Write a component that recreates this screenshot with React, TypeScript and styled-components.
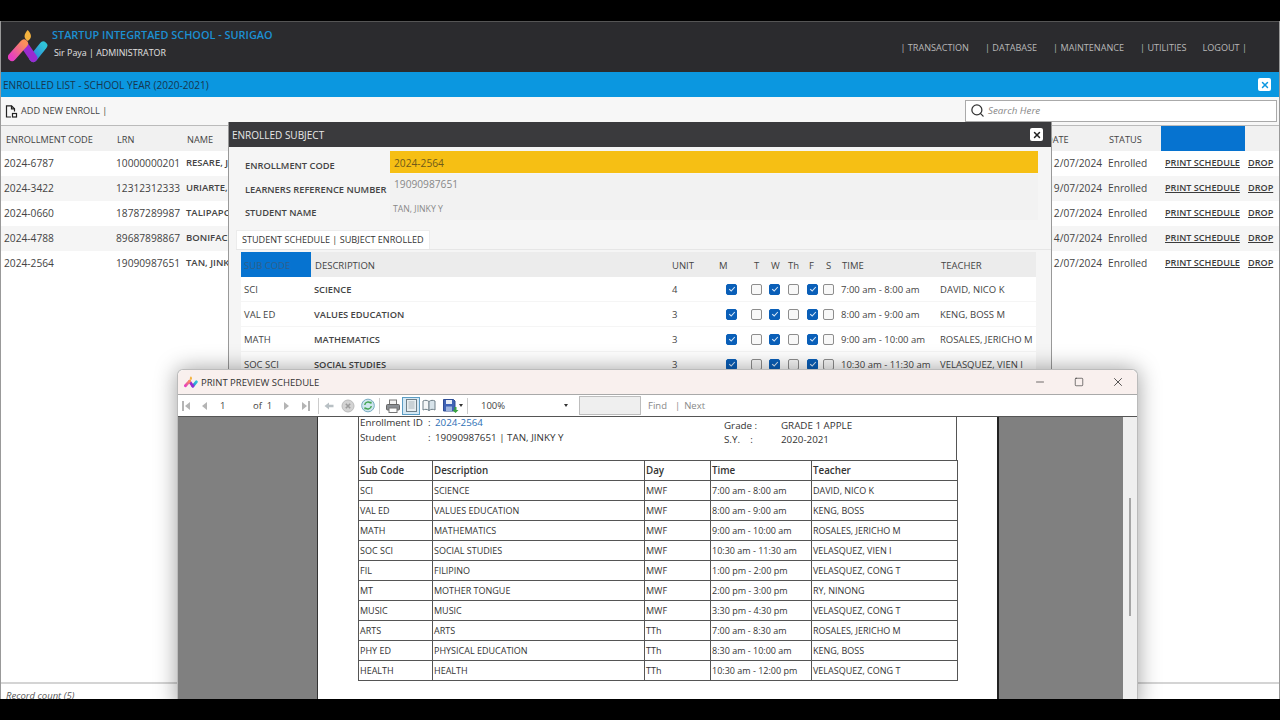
import { createGlobalStyle, styled } from 'styled-components';
import { Minus, Square, X, Search } from 'lucide-react';

const GlobalStyle = createGlobalStyle`
  html, body { margin: 0; padding: 0; background: #000; }
  * { box-sizing: border-box; }
  body { font-family: "Open Sans", "Noto Sans", "Liberation Sans", sans-serif; }
`;

const ENROLLED = [
  { code: '2024-6787', lrn: '10000000201', name: 'RESARE, J', date: '12/07/2024' },
  { code: '2024-3422', lrn: '12312312333', name: 'URIARTE, J', date: '19/07/2024' },
  { code: '2024-0660', lrn: '18787289987', name: 'TALIPAPO', date: '12/07/2024' },
  { code: '2024-4788', lrn: '89687898867', name: 'BONIFACI', date: '14/07/2024' },
  { code: '2024-2564', lrn: '19090987651', name: 'TAN, JINK', date: '12/07/2024' },
];

const SUBJECTS = [
  { code: 'SCI', desc: 'SCIENCE', unit: 4, time: '7:00 am - 8:00 am', teacher: 'DAVID, NICO K' },
  { code: 'VAL ED', desc: 'VALUES EDUCATION', unit: 3, time: '8:00 am - 9:00 am', teacher: 'KENG, BOSS M' },
  { code: 'MATH', desc: 'MATHEMATICS', unit: 3, time: '9:00 am - 10:00 am', teacher: 'ROSALES, JERICHO M' },
  { code: 'SOC SCI', desc: 'SOCIAL STUDIES', unit: 3, time: '10:30 am - 11:30 am', teacher: 'VELASQUEZ, VIEN I' },
];

const DAYS = [
  { label: 'M', width: 38, labelAt: 7, boxAt: 14, checked: true },
  { label: 'T', width: 17, labelAt: 4, boxAt: 1, checked: false },
  { label: 'W', width: 18, labelAt: 4, boxAt: 2, checked: true },
  { label: 'Th', width: 19, labelAt: 3, boxAt: 3, checked: false },
  { label: 'F', width: 17, labelAt: 5, boxAt: 3, checked: true },
  { label: 'S', width: 17, labelAt: 5, boxAt: 2, checked: false },
];

const REPORT = [
  ['SCI', 'SCIENCE', 'MWF', '7:00 am - 8:00 am', 'DAVID, NICO K'],
  ['VAL ED', 'VALUES EDUCATION', 'MWF', '8:00 am - 9:00 am', 'KENG, BOSS'],
  ['MATH', 'MATHEMATICS', 'MWF', '9:00 am - 10:00 am', 'ROSALES, JERICHO M'],
  ['SOC SCI', 'SOCIAL STUDIES', 'MWF', '10:30 am - 11:30 am', 'VELASQUEZ, VIEN I'],
  ['FIL', 'FILIPINO', 'MWF', '1:00 pm - 2:00 pm', 'VELASQUEZ, CONG T'],
  ['MT', 'MOTHER TONGUE', 'MWF', '2:00 pm - 3:00 pm', 'RY, NINONG'],
  ['MUSIC', 'MUSIC', 'MWF', '3:30 pm - 4:30 pm', 'VELASQUEZ, CONG T'],
  ['ARTS', 'ARTS', 'TTh', '7:00 am - 8:30 am', 'ROSALES, JERICHO M'],
  ['PHY ED', 'PHYSICAL EDUCATION', 'TTh', '8:30 am - 10:00 am', 'KENG, BOSS'],
  ['HEALTH', 'HEALTH', 'TTh', '10:30 am - 12:00 pm', 'VELASQUEZ, CONG T'],
];

const Logo = ({ size }: { size: number }) => (
  <svg width={size} height={size * 0.9} viewBox="0 0 40 36">
    <defs>
      <linearGradient id="lgPink" x1="0" y1="1" x2="1" y2="0">
        <stop offset="0" stopColor="#e63fc0" />
        <stop offset="1" stopColor="#fb8f5a" />
      </linearGradient>
      <linearGradient id="lgBlue" x1="0" y1="1" x2="1" y2="0">
        <stop offset="0" stopColor="#2f7fd8" />
        <stop offset="1" stopColor="#2fc3d8" />
      </linearGradient>
    </defs>
    <path d="M19.7 1 C23.5 5 24.5 9 19.7 12 C15 9 16 5 19.7 1 Z" fill="#f4b23e" />
    <path d="M25.3 29 L35.3 16.5" stroke="url(#lgBlue)" strokeWidth="8" strokeLinecap="round" />
    <path d="M16 15.5 L25.3 29" stroke="#9a2bd0" strokeWidth="8" strokeLinecap="round" />
    <path d="M4 28 L16 14.5" stroke="url(#lgPink)" strokeWidth="8" strokeLinecap="round" />
  </svg>
);

const AddDocIcon = () => (
  <svg width="13" height="13" viewBox="0 0 13 13" fill="none" stroke="#222" strokeWidth="1.2">
    <path d="M6 12 H1.5 V0.8 H6.5 L9.5 3.8 V6.5" />
    <path d="M6.5 0.8 V3.8 H9.5" />
    <rect x="7.5" y="8.5" width="4" height="3.5" fill="#fff" />
  </svg>
);

const Tri = ({ dir, bar, color = '#b4b4b4' }: { dir: 'l' | 'r'; bar?: boolean; color?: string }) => (
  <svg width="10" height="12" viewBox="0 0 10 12">
    {dir === 'l' ? <path d="M8 2 V10 L3 6 Z" fill={color} /> : <path d="M2 2 V10 L7 6 Z" fill={color} />}
    {bar && <rect x={dir === 'l' ? 0 : 8} y="1" width="2" height="10" fill={color} />}
  </svg>
);

const BackIcon = () => (
  <svg width="10" height="10" viewBox="0 0 10 10">
    <path d="M0.5 5 L5 1.5 V3.8 H9.5 V6.2 H5 V8.5 Z" fill="#b8c0c4" />
  </svg>
);

const StopIcon = () => (
  <svg width="14" height="14" viewBox="0 0 14 14">
    <circle cx="7" cy="7" r="6" fill="#d3d3d3" stroke="#bbb" />
    <path d="M4.8 4.8 L9.2 9.2 M9.2 4.8 L4.8 9.2" stroke="#9c9c9c" strokeWidth="1.6" />
  </svg>
);

const RefreshIcon = () => (
  <svg width="15" height="15" viewBox="0 0 15 15">
    <circle cx="7.5" cy="7.5" r="6.8" fill="#cfe6ee" stroke="#6fa6bd" />
    <path d="M4 7 A3.6 3.6 0 0 1 10.5 5.2" fill="none" stroke="#3fa34d" strokeWidth="1.5" />
    <path d="M11 8 A3.6 3.6 0 0 1 4.5 9.8" fill="none" stroke="#3fa34d" strokeWidth="1.5" />
    <path d="M9.3 3.4 L11.6 3.6 L11 6 Z M5.7 11.6 L3.4 11.4 L4 9 Z" fill="#3fa34d" />
  </svg>
);

const PrinterIcon = () => (
  <svg width="14" height="14" viewBox="0 0 14 14">
    <rect x="3.5" y="1" width="7" height="5" fill="#f2f2f2" stroke="#777" />
    <rect x="0.5" y="5.5" width="13" height="5.5" rx="1" fill="#8b8f94" stroke="#666" />
    <rect x="3" y="9" width="8" height="4.5" fill="#fff" stroke="#777" />
  </svg>
);

const PageIcon = () => (
  <svg width="11" height="13" viewBox="0 0 11 13">
    <rect x="0.5" y="0.5" width="10" height="12" fill="#e8eef0" stroke="#6f7f88" />
    <path d="M2.5 3 H8.5 M2.5 5 H8.5 M2.5 7 H8.5 M2.5 9 H8.5" stroke="#a9b4ba" />
  </svg>
);

const BookIcon = () => (
  <svg width="14" height="13" viewBox="0 0 14 13">
    <path d="M1 2 C3 1 5 1 7 2.5 V11.5 C5 10 3 10 1 11 Z" fill="#f4f6f7" stroke="#6f7f88" />
    <path d="M13 2 C11 1 9 1 7 2.5 V11.5 C9 10 11 10 13 11 Z" fill="#d7e3ea" stroke="#6f7f88" />
  </svg>
);

const SaveIcon = () => (
  <svg width="16" height="14" viewBox="0 0 16 14">
    <path d="M0.5 0.5 H10.5 L12 2 V12 H0.5 Z" fill="#3f63b5" stroke="#2e4c94" />
    <rect x="3" y="1" width="6" height="4" fill="#e8eef6" />
    <rect x="3" y="7.5" width="6" height="4.5" fill="#9db4de" />
    <path d="M11.5 8 V11 H9.5 L12.5 14 L15.5 11 H13.5 V8 Z" fill="#3aa53f" />
  </svg>
);

const Shell = styled.div`
  width: 1280px;
  height: 720px;
  padding: 21px 0;
  background: #000;
  overflow: hidden;
`;

const Screen = styled.div`
  position: relative;
  display: flex;
  flex-direction: column;
  height: 678px;
  overflow: hidden;
  background: #fff;
  border-left: 1px solid #999;
  border-right: 1px solid #999;
`;

const Header = styled.header`
  display: flex;
  align-items: center;
  height: 51px;
  padding: 0 32px 0 7px;
  background: #2b2b2e;
  border-top: 1px solid #555;
`;

const Brand = styled.div`
  display: flex;
  flex-direction: column;
  margin-left: 4px;
`;

const BrandTitle = styled.div`
  margin-top: -7px;
  font-size: 10.9px;
  font-weight: 600;
  line-height: 16px;
  color: #1c8fd2;
`;

const BrandSub = styled.div`
  margin: 2px 0 0 2px;
  font-size: 8.9px;
  line-height: 16px;
  color: #e2e2e2;
`;

const Nav = styled.nav`
  display: flex;
  gap: 16px;
  margin: 0 0 0 auto;
  font-size: 9.1px;
  color: #b9b9b9;
`;

const TitleBar = styled.div`
  display: flex;
  align-items: center;
  justify-content: space-between;
  flex: none;
  height: 25px;
  padding: 0 8px 0 2px;
  background: #0b97e0;
  font-size: 10.1px;
  color: #17364e;
`;

const CloseBtn = styled.span<{ $color: string }>`
  display: flex;
  align-items: center;
  justify-content: center;
  width: 13px;
  height: 13px;
  border-radius: 2px;
  background: #fff;
  color: ${({ $color }) => $color};
`;

const Toolbar = styled.div`
  display: flex;
  align-items: center;
  flex: none;
  height: 29px;
  padding: 0 2px 0 4px;
  background: #f7f7f7;
  border-bottom: 1px solid #bbb;
  font-size: 9.2px;
  color: #444;
`;

const AddLabel = styled.span`
  margin-left: 3px;
  padding-bottom: 2px;
`;

const SearchBox = styled.div`
  display: flex;
  align-items: center;
  gap: 3px;
  width: 312px;
  height: 22px;
  margin-left: auto;
  padding: 0 4px 2px;
  background: #fff;
  border: 1px solid #aaa;
  font-size: 9.8px;
  font-style: italic;
  color: #888;
`;

const ListGrid = styled.div`
  display: grid;
  grid-template-columns: 111px 70px 859px 67px 53px 84px 34px;
  align-items: center;
  height: 25px;
`;

const ListHead = styled(ListGrid)`
  background: #f1f1f1;
  font-size: 9.2px;
  color: #444;
`;

const ListRow = styled(ListGrid)<{ $alt: boolean }>`
  padding-bottom: 2px;
  background: ${({ $alt }) => ($alt ? '#f5f5f5' : '#fff')};
  font-size: 10.2px;
  color: #444;
`;

const Cell = styled.div<{ $pad?: number; $bold?: boolean }>`
  padding-left: ${({ $pad }) => $pad ?? 3}px;
  font-weight: ${({ $bold }) => ($bold ? 600 : 400)};
  white-space: nowrap;
  overflow: hidden;
`;

const HeadCell = styled(Cell)`
  margin-top: 2px;
`;

const NameCell = styled(Cell)`
  font-size: 9.5px;
`;

const DescCell = styled(Cell)`
  font-size: 9.3px;
`;

const BlueHead = styled.div`
  height: 25px;
  background: #0673d0;
`;

const LinkCell = styled.a<{ $pad: number }>`
  padding-left: ${({ $pad }) => $pad}px;
  font-size: 9.1px;
  font-weight: 600;
  color: #3c3c3c;
  text-decoration: underline;
  white-space: nowrap;
`;

const ListBody = styled.div`
  flex: 1;
`;

const Footer = styled.div`
  flex: none;
  height: 17px;
  padding: 6px 0 0 5px;
  border-top: 2px solid #d4d4d4;
  font-size: 9.5px;
  line-height: 12px;
  font-style: italic;
  color: #555;
`;

const Modal = styled.section`
  position: absolute;
  top: 101px;
  left: 227px;
  display: flex;
  flex-direction: column;
  width: 824px;
  height: 340px;
  background: #f5f5f5;
  border-left: 1px solid #999;
  border-right: 1px solid #999;
`;

const ModalTitle = styled.div`
  display: flex;
  align-items: center;
  justify-content: space-between;
  flex: none;
  height: 25px;
  padding: 0 8px 0 3px;
  background: #3a3a3d;
  font-size: 10px;
  color: #e8e8e8;
`;

const Form = styled.div`
  display: flex;
  flex-direction: column;
  gap: 1px;
  padding: 4px 13px 0 16px;
`;

const FormRow = styled.div`
  display: grid;
  grid-template-columns: 145px 1fr;
  height: 22px;
`;

const FormLabel = styled.label<{ $top: number }>`
  padding-top: ${({ $top }) => $top}px;
  font-size: 9.3px;
  line-height: 14px;
  font-weight: 600;
  color: #444;
  white-space: nowrap;
`;

const FormValue = styled.div<{ $hi?: boolean; $top?: number; $small?: boolean }>`
  padding: ${({ $top }) => $top ?? 5}px 0 0 ${({ $small }) => ($small ? 3 : 4)}px;
  background: ${({ $hi }) => ($hi ? '#f6bf14' : '#f2f2f2')};
  font-size: ${({ $small }) => ($small ? 8.7 : 10.2)}px;
  line-height: 14px;
  color: ${({ $hi }) => ($hi ? '#6f5a1a' : '#888')};
`;

const TabStrip = styled.div`
  display: flex;
  margin: 11px 0 0 7px;
  border-bottom: 1px solid #e6e6e6;
  flex: none;
`;

const Tab = styled.div`
  height: 19px;
  padding: 2px 5px 0;
  background: #fff;
  border: 1px solid #ececec;
  border-bottom: none;
  font-size: 9.1px;
  line-height: 14px;
  color: #333;
`;

const SubjectTable = styled.div`
  width: 795px;
  margin: 2px 0 0 12px;
`;

const SubjectGrid = styled.div`
  display: grid;
  grid-template-columns: 70px 357px 44px 38px 17px 18px 19px 17px 17px 99px 99px;
  align-items: center;
  height: 25px;
  font-size: 9.5px;
  color: #444;
`;

const SubjectHead = styled(SubjectGrid)`
  background: #ececec;
`;

const SubjectRow = styled(SubjectGrid)`
  background: #fff;
  border-bottom: 1px solid #f5f5f5;
`;

const BlueCell = styled.div`
  display: flex;
  align-items: center;
  height: 25px;
  padding: 2px 0 0 3px;
  background: #0673d0;
  color: #2f5f8a;
`;

const CheckBox = styled.span<{ $at: number; $on: boolean }>`
  display: flex;
  align-items: center;
  justify-content: center;
  width: 11px;
  height: 11px;
  margin-left: ${({ $at }) => $at}px;
  border-radius: 2px;
  background: ${({ $on }) => ($on ? '#0a5fb8' : '#f8f8f8')};
  border: 1px solid ${({ $on }) => ($on ? '#0a5fb8' : '#8d8d8d')};
`;

const PrintWindow = styled.section`
  position: absolute;
  top: 348px;
  left: 176px;
  display: flex;
  flex-direction: column;
  width: 961px;
  height: 340px;
  background: #fff;
  border: 1px solid #bbb;
  border-bottom: none;
  border-radius: 6px 6px 0 0;
  box-shadow: 0 0 22px rgba(0, 0, 0, 0.38);
`;

const PrintTitle = styled.div`
  display: flex;
  align-items: center;
  flex: none;
  height: 24px;
  padding-left: 6px;
  border-radius: 6px 6px 0 0;
  background: #f9f0ee;
  font-size: 9.5px;
  color: #333;
`;

const PrintTitleText = styled.span`
  margin-left: 3px;
`;

const WinButtons = styled.div`
  display: flex;
  margin-left: auto;
  color: #111;
`;

const WinButton = styled.span<{ $w: number }>`
  display: flex;
  align-items: center;
  justify-content: center;
  width: ${({ $w }) => $w}px;
  height: 24px;
`;

const PrintToolbar = styled.div`
  display: flex;
  align-items: center;
  flex: none;
  height: 23px;
  padding-left: 2px;
  background: #fff;
  border-top: 1px solid #a9a9a9;
  border-bottom: 1px solid #555;
  font-size: 9.5px;
  color: #444;
`;

const ToolSlot = styled.span<{ $w: number; $active?: boolean; $end?: boolean }>`
  display: flex;
  align-items: center;
  justify-content: ${({ $end }) => ($end ? 'flex-end' : 'center')};
  flex: none;
  width: ${({ $w }) => $w}px;
  height: 18px;
  background: ${({ $active }) => ($active ? '#d4e8f4' : 'transparent')};
  border: ${({ $active }) => ($active ? '1px solid #5c9dc4' : 'none')};
`;

const ToolSep = styled.span`
  flex: none;
  width: 1px;
  height: 16px;
  margin: 0 4px;
  background: #ccc;
`;

const PageInput = styled.span`
  flex: none;
  width: 36px;
  padding-left: 7px;
`;

const OfLabel = styled.span`
  flex: none;
  width: 28px;
  padding-left: 4px;
  white-space: nowrap;
`;

const ZoomSelect = styled.div`
  display: flex;
  align-items: center;
  justify-content: space-between;
  flex: none;
  width: 90px;
  margin-left: 9px;
  padding-right: 3px;
`;

const Caret = styled.span`
  width: 0;
  height: 0;
  border-left: 2.5px solid transparent;
  border-right: 2.5px solid transparent;
  border-top: 3px solid #333;
`;

const FindInput = styled.span`
  flex: none;
  width: 62px;
  height: 19px;
  margin-left: 8px;
  background: #efefef;
  border: 1px solid #bdbdbd;
`;

const FindLink = styled.span<{ $ml: number }>`
  margin-left: ${({ $ml }) => $ml}px;
  color: #888;
`;

const PreviewArea = styled.div`
  display: grid;
  grid-template-columns: 139px 682px 124px 1fr;
  flex: 1;
  min-height: 0;
`;

const Gutter = styled.div`
  background: #808080;
`;

const ScrollTrack = styled.div`
  display: flex;
  justify-content: center;
  background: #efefef;
`;

const ScrollThumb = styled.div`
  width: 2px;
  height: 118px;
  margin-top: 81px;
  background: #a5a5a5;
`;

const Paper = styled.div`
  padding: 0 41px 0 40px;
  background: #fff;
  border-left: 1px solid #333;
  border-right: 2px solid #222;
`;

const ReportHead = styled.div`
  display: flex;
  width: 599px;
  height: 43px;
  border-left: 1px solid #555;
  border-right: 1px solid #555;
  font-size: 9.8px;
  line-height: 15px;
  color: #333;
`;

const ReportLeft = styled.div`
  width: 365px;
  margin-top: -2px;
`;

const ReportLine = styled.div`
  display: grid;
  grid-template-columns: 68px 7px 1fr;
  padding-left: 1px;
  white-space: nowrap;
`;

const ReportRight = styled.div`
  display: grid;
  grid-template-columns: 57px 1fr;
  align-content: start;
  padding-top: 2px;
  line-height: 14px;
`;

const EnrollId = styled.span`
  color: #2f6fb5;
`;

const ReportTable = styled.table`
  width: 599px;
  border-collapse: collapse;
  table-layout: fixed;
  font-size: 9px;
  color: #333;
`;

const Th = styled.th<{ $w: number }>`
  width: ${({ $w }) => $w}px;
  height: 20px;
  padding: 0 0 0 1px;
  border: 1px solid #555;
  text-align: left;
  font-size: 9.8px;
  font-weight: 600;
`;

const Td = styled.td`
  height: 20px;
  padding: 0 0 0 1px;
  border: 1px solid #555;
  white-space: nowrap;
  overflow: hidden;
`;

const COLUMNS: [string, number][] = [
  ['Sub Code', 74],
  ['Description', 212],
  ['Day', 66],
  ['Time', 101],
  ['Teacher', 146],
];

const App = () => {
  return (
    <Shell>
      <GlobalStyle />
      <Screen>
        <Header>
          <Logo size={40} />
          <Brand>
            <BrandTitle>STARTUP INTEGRTAED SCHOOL - SURIGAO</BrandTitle>
            <BrandSub>Sir Paya | ADMINISTRATOR</BrandSub>
          </Brand>
          <Nav>
            <span>| TRANSACTION</span>
            <span>| DATABASE</span>
            <span>| MAINTENANCE</span>
            <span>| UTILITIES</span>
            <span>LOGOUT |</span>
          </Nav>
        </Header>

        <TitleBar>
          ENROLLED LIST - SCHOOL YEAR (2020-2021)
          <CloseBtn $color="#0b97e0">
            <X size={10} strokeWidth={3.5} />
          </CloseBtn>
        </TitleBar>

        <Toolbar>
          <AddDocIcon />
          <AddLabel>ADD NEW ENROLL |</AddLabel>
          <SearchBox>
            <Search size={15} color="#333" />
            Search Here
          </SearchBox>
        </Toolbar>

        <ListHead>
          <HeadCell $pad={5}>ENROLLMENT CODE</HeadCell>
          <HeadCell $pad={5}>LRN</HeadCell>
          <HeadCell $pad={5}>NAME</HeadCell>
          <HeadCell $pad={5}>DATE</HeadCell>
          <HeadCell $pad={1}>STATUS</HeadCell>
          <BlueHead />
          <span />
        </ListHead>
        <ListBody>
          {ENROLLED.map((row, i) => (
            <ListRow key={row.code} $alt={i % 2 === 1}>
              <Cell>{row.code}</Cell>
              <Cell $pad={4}>{row.lrn}</Cell>
              <NameCell $pad={4} $bold>{row.name}</NameCell>
              <Cell $pad={7}>{row.date}</Cell>
              <Cell $pad={0}>Enrolled</Cell>
              <LinkCell $pad={4}>PRINT SCHEDULE</LinkCell>
              <LinkCell $pad={3}>DROP</LinkCell>
            </ListRow>
          ))}
        </ListBody>
        <Footer>Record count (5)</Footer>

        <Modal>
          <ModalTitle>
            ENROLLED SUBJECT
            <CloseBtn $color="#222">
              <X size={10} strokeWidth={3.5} />
            </CloseBtn>
          </ModalTitle>
          <Form>
            <FormRow>
              <FormLabel $top={8}>ENROLLMENT CODE</FormLabel>
              <FormValue $hi>2024-2564</FormValue>
            </FormRow>
            <FormRow>
              <FormLabel $top={9}>LEARNERS REFERENCE NUMBER</FormLabel>
              <FormValue $top={3}>19090987651</FormValue>
            </FormRow>
            <FormRow>
              <FormLabel $top={9}>STUDENT NAME</FormLabel>
              <FormValue $top={5} $small>TAN, JINKY Y</FormValue>
            </FormRow>
          </Form>
          <TabStrip>
            <Tab>STUDENT SCHEDULE | SUBJECT ENROLLED</Tab>
          </TabStrip>
          <SubjectTable>
            <SubjectHead>
              <BlueCell>SUB CODE</BlueCell>
              <HeadCell $pad={4}>DESCRIPTION</HeadCell>
              <HeadCell $pad={4}>UNIT</HeadCell>
              {DAYS.map((d) => (
                <HeadCell key={d.label} $pad={d.labelAt}>{d.label}</HeadCell>
              ))}
              <HeadCell $pad={4}>TIME</HeadCell>
              <HeadCell $pad={4}>TEACHER</HeadCell>
            </SubjectHead>
            {SUBJECTS.map((s) => (
              <SubjectRow key={s.code}>
                <Cell>{s.code}</Cell>
                <DescCell $pad={3} $bold>{s.desc}</DescCell>
                <Cell $pad={4}>{s.unit}</Cell>
                {DAYS.map((d) => (
                  <CheckBox key={d.label} $at={d.boxAt} $on={d.checked}>
                    {d.checked && (
                      <svg width="8" height="8" viewBox="0 0 8 8">
                        <path d="M1.2 4.2 L3.2 6 L6.8 2" fill="none" stroke="#dbe9f7" strokeWidth="1.1" />
                      </svg>
                    )}
                  </CheckBox>
                ))}
                <Cell>{s.time}</Cell>
                <Cell>{s.teacher}</Cell>
              </SubjectRow>
            ))}
          </SubjectTable>
        </Modal>

        <PrintWindow>
          <PrintTitle>
            <Logo size={14} />
            <PrintTitleText>PRINT PREVIEW SCHEDULE</PrintTitleText>
            <WinButtons>
              <WinButton $w={39}><Minus size={12} strokeWidth={1.2} /></WinButton>
              <WinButton $w={39}><Square size={10} strokeWidth={1.3} /></WinButton>
              <WinButton $w={39}><X size={14} strokeWidth={1.2} /></WinButton>
            </WinButtons>
          </PrintTitle>
          <PrintToolbar>
            <ToolSlot $w={14}><Tri dir="l" bar /></ToolSlot>
            <ToolSlot $w={19}><Tri dir="l" /></ToolSlot>
            <PageInput>1</PageInput>
            <OfLabel>of&nbsp;&nbsp;1</OfLabel>
            <ToolSlot $w={19}><Tri dir="r" /></ToolSlot>
            <ToolSlot $w={18}><Tri dir="r" bar /></ToolSlot>
            <ToolSep />
            <ToolSlot $w={12}><BackIcon /></ToolSlot>
            <ToolSlot $w={26}><StopIcon /></ToolSlot>
            <ToolSlot $w={14}><RefreshIcon /></ToolSlot>
            <ToolSep />
            <ToolSlot $w={18}><PrinterIcon /></ToolSlot>
            <ToolSlot $w={18} $active><PageIcon /></ToolSlot>
            <ToolSlot $w={18}><BookIcon /></ToolSlot>
            <ToolSlot $w={21} $end><SaveIcon /></ToolSlot>
            <Caret />
            <ToolSep />
            <ZoomSelect>
              100%
              <Caret />
            </ZoomSelect>
            <FindInput />
            <FindLink $ml={7}>Find</FindLink>
            <FindLink $ml={8}>|</FindLink>
            <FindLink $ml={4}>Next</FindLink>
          </PrintToolbar>
          <PreviewArea>
            <Gutter />
            <Paper>
              <ReportHead>
                <ReportLeft>
                  <ReportLine>
                    <span>Enrollment ID</span>
                    <span>:</span>
                    <EnrollId>2024-2564</EnrollId>
                  </ReportLine>
                  <ReportLine>
                    <span>Student</span>
                    <span>:</span>
                    <span>19090987651 | TAN, JINKY Y</span>
                  </ReportLine>
                </ReportLeft>
                <ReportRight>
                  <span>Grade :</span>
                  <span>GRADE 1 APPLE</span>
                  <span>S.Y. &nbsp; &nbsp;:</span>
                  <span>2020-2021</span>
                </ReportRight>
              </ReportHead>
              <ReportTable>
                <thead>
                  <tr>
                    {COLUMNS.map(([label, w]) => (
                      <Th key={label} $w={w}>{label}</Th>
                    ))}
                  </tr>
                </thead>
                <tbody>
                  {REPORT.map((row) => (
                    <tr key={row[0]}>
                      {row.map((v) => (
                        <Td key={v}>{v}</Td>
                      ))}
                    </tr>
                  ))}
                </tbody>
              </ReportTable>
            </Paper>
            <Gutter />
            <ScrollTrack>
              <ScrollThumb />
            </ScrollTrack>
          </PreviewArea>
        </PrintWindow>
      </Screen>
    </Shell>
  );
};

export default App;
